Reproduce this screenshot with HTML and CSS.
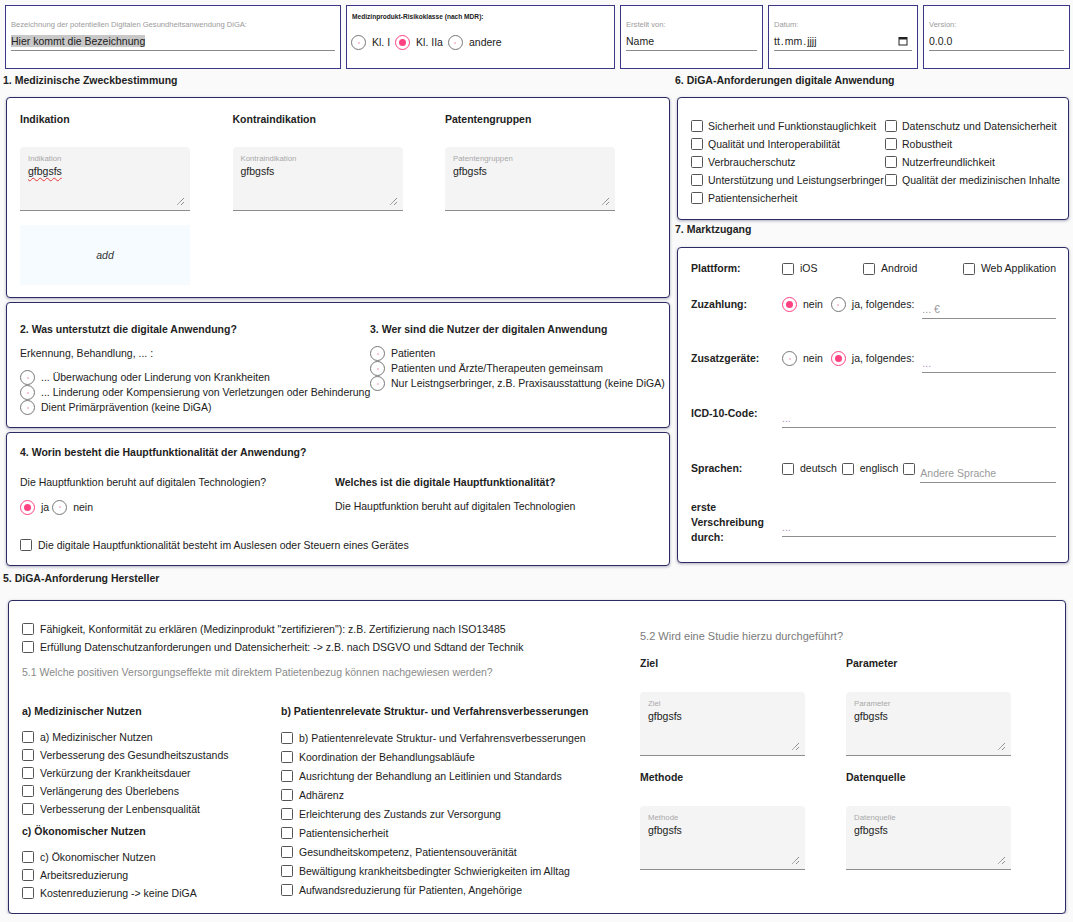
FILE: index.html
```html
<!DOCTYPE html>
<html lang="de">
<head>
<meta charset="utf-8">
<title>DiGA Formular</title>
<link rel="stylesheet" href="styles.css">
</head>
<body>
<div class="page">
  <header class="topbar">
    <div class="tbox w1">
      <div class="tlabel">Bezeichnung der potentiellen Digitalen Gesundheitsanwendung DiGA:</div>
      <div class="tvalue"><span class="selected">Hier kommt die Bezeichnung</span></div>
    </div>
    <div class="tbox w2">
      <div class="class-title">Medizinprodukt-Risikoklasse (nach MDR):</div>
      <div class="class-opts">
        <span class="opt"><span class="radio"></span>Kl. I</span>
        <span class="opt"><span class="radio on"></span>Kl. IIa</span>
        <span class="opt"><span class="radio"></span>andere</span>
      </div>
    </div>
    <div class="tbox w3">
      <div class="tlabel">Erstellt von:</div>
      <div class="tvalue">Name</div>
    </div>
    <div class="tbox w4">
      <div class="tlabel">Datum:</div>
      <div class="tvalue date"><span class="dtext">tt<span class="sep">.</span>mm<span class="sep">.</span>jjjj</span>
        <svg class="cal" width="10" height="10" viewBox="0 0 10 10"><rect x="1" y="1.5" width="8" height="7.5" fill="none" stroke="#222" stroke-width="1"/><rect x="1" y="1.5" width="8" height="2" fill="#222"/></svg>
      </div>
    </div>
    <div class="tbox w5">
      <div class="tlabel">Version:</div>
      <div class="tvalue">0.0.0</div>
    </div>
  </header>

  <div class="main">
    <div class="col-left">
      <div class="sec-title">1. Medizinische Zweckbestimmung</div>
      <section class="card card1">
        <div class="grid3">
          <div class="tacol">
            <div class="colhead">Indikation</div>
            <div class="ta"><div class="ta-label">Indikation</div><div class="ta-value"><span class="spell">gfbgsfs</span></div>
              <svg class="grip" width="9" height="9" viewBox="0 0 9 9"><path d="M8 1 L1 8 M8 5 L5 8" stroke="#555" stroke-width="0.9" stroke-dasharray="1 0.6"/></svg></div>
            <div class="addbox">add</div>
          </div>
          <div class="tacol">
            <div class="colhead">Kontraindikation</div>
            <div class="ta"><div class="ta-label">Kontraindikation</div><div class="ta-value">gfbgsfs</div>
              <svg class="grip" width="9" height="9" viewBox="0 0 9 9"><path d="M8 1 L1 8 M8 5 L5 8" stroke="#555" stroke-width="0.9" stroke-dasharray="1 0.6"/></svg></div>
          </div>
          <div class="tacol">
            <div class="colhead">Patentengruppen</div>
            <div class="ta"><div class="ta-label">Patentengruppen</div><div class="ta-value">gfbgsfs</div>
              <svg class="grip" width="9" height="9" viewBox="0 0 9 9"><path d="M8 1 L1 8 M8 5 L5 8" stroke="#555" stroke-width="0.9" stroke-dasharray="1 0.6"/></svg></div>
          </div>
        </div>
      </section>

      <section class="card card2">
        <div class="c2grid">
          <div>
            <div class="bhead">2. Was unterstutzt die digitale Anwendung?</div>
            <div class="c2sub">Erkennung, Behandlung, ... :</div>
            <div class="rlist">
              <span class="opt row15"><span class="radio"></span>... Überwachung oder Linderung von Krankheiten</span>
              <span class="opt row15"><span class="radio"></span>... Linderung oder Kompensierung von Verletzungen oder Behinderung</span>
              <span class="opt row15"><span class="radio"></span>Dient Primärprävention (keine DiGA)</span>
            </div>
          </div>
          <div>
            <div class="bhead">3. Wer sind die Nutzer der digitalen Anwendung</div>
            <div class="rlist">
              <span class="opt row15"><span class="radio"></span>Patienten</span>
              <span class="opt row15"><span class="radio"></span>Patienten und Ärzte/Therapeuten gemeinsam</span>
              <span class="opt row15"><span class="radio"></span>Nur Leistngserbringer, z.B. Praxisausstattung (keine DiGA)</span>
            </div>
          </div>
        </div>
      </section>

      <section class="card card3">
        <div class="bhead">4. Worin besteht die Hauptfunktionalität der Anwendung?</div>
        <div class="c3grid">
          <div class="c3q">Die Hauptfunktion beruht auf digitalen Technologien?</div>
          <div class="c3q bhead">Welches ist die digitale Hauptfunktionalität?</div>
          <div class="c3opts">
            <span class="opt"><span class="radio on"></span>ja</span>
            <span class="opt"><span class="radio"></span>nein</span>
          </div>
          <div class="c3ans">Die Hauptfunktion beruht auf digitalen Technologien</div>
        </div>
        <div class="opt c3check"><span class="cb"></span>Die digitale Hauptfunktionalität besteht im Auslesen oder Steuern eines Gerätes</div>
      </section>
    </div>

    <div class="col-right">
      <div class="sec-title">6. DiGA-Anforderungen digitale Anwendung</div>
      <section class="card card6">
        <div class="c6grid">
          <span class="opt"><span class="cb"></span>Sicherheit und Funktionstauglichkeit</span>
          <span class="opt"><span class="cb"></span>Qualität und Interoperabilität</span>
          <span class="opt"><span class="cb"></span>Verbraucherschutz</span>
          <span class="opt"><span class="cb"></span>Unterstützung und Leistungserbringer</span>
          <span class="opt"><span class="cb"></span>Patientensicherheit</span>
          <span class="opt"><span class="cb"></span>Datenschutz und Datensicherheit</span>
          <span class="opt"><span class="cb"></span>Robustheit</span>
          <span class="opt"><span class="cb"></span>Nutzerfreundlichkeit</span>
          <span class="opt"><span class="cb"></span>Qualität der medizinischen Inhalte</span>
        </div>
      </section>
      <div class="sec-title t7">7. Marktzugang</div>
      <section class="card card7">
        <div class="mrow r1">
          <div class="mlabel">Plattform:</div>
          <div class="mctl spread">
            <span class="opt"><span class="cb"></span>iOS</span>
            <span class="opt"><span class="cb"></span>Android</span>
            <span class="opt"><span class="cb"></span>Web Applikation</span>
          </div>
        </div>
        <div class="mrow r2">
          <div class="mlabel">Zuzahlung:</div>
          <div class="mctl">
            <span class="opt"><span class="radio on"></span>nein</span>
            <span class="opt"><span class="radio"></span>ja, folgendes:</span>
            <span class="line"><span class="ph">... €</span></span>
          </div>
        </div>
        <div class="mrow r3">
          <div class="mlabel">Zusatzgeräte:</div>
          <div class="mctl">
            <span class="opt"><span class="radio"></span>nein</span>
            <span class="opt"><span class="radio on"></span>ja, folgendes:</span>
            <span class="line"><span class="ph dots">...</span></span>
          </div>
        </div>
        <div class="mrow r4">
          <div class="mlabel">ICD-10-Code:</div>
          <div class="mctl">
            <span class="line"><span class="ph dots">...</span></span>
          </div>
        </div>
        <div class="mrow r5">
          <div class="mlabel">Sprachen:</div>
          <div class="mctl">
            <span class="opt"><span class="cb"></span>deutsch</span>
            <span class="opt"><span class="cb"></span>englisch</span>
            <span class="opt"><span class="cb"></span></span>
            <span class="line"><span class="ph">Andere Sprache</span></span>
          </div>
        </div>
        <div class="mrow r6">
          <div class="mlabel">erste Verschreibung durch:</div>
          <div class="mctl">
            <span class="line low"><span class="ph dots">...</span></span>
          </div>
        </div>
      </section>
    </div>
  </div>

  <div class="sec-title t5">5. DiGA-Anforderung Hersteller</div>
  <section class="card card5">
    <div class="c5left">
      <div class="opt row18"><span class="cb"></span>Fähigkeit, Konformität zu erklären (Medizinprodukt "zertifizieren"): z.B. Zertifizierung nach ISO13485</div>
      <div class="opt row18"><span class="cb"></span>Erfüllung Datenschutzanforderungen und Datensicherheit: -&gt; z.B. nach DSGVO und Sdtand der Technik</div>
      <div class="graytext q51">5.1 Welche positiven Versorgungseffekte mit direktem Patietenbezug können nachgewiesen werden?</div>
      <div class="c5grid">
        <div>
          <div class="bhead">a) Medizinischer Nutzen</div>
          <div class="clist">
            <span class="opt row18"><span class="cb"></span>a) Medizinischer Nutzen</span>
            <span class="opt row18"><span class="cb"></span>Verbesserung des Gesundheitszustands</span>
            <span class="opt row18"><span class="cb"></span>Verkürzung der Krankheitsdauer</span>
            <span class="opt row18"><span class="cb"></span>Verlängerung des Überlebens</span>
            <span class="opt row18"><span class="cb"></span>Verbesserung der Lenbensqualität</span>
          </div>
          <div class="bhead chead">c) Ökonomischer Nutzen</div>
          <div class="clist">
            <span class="opt row18"><span class="cb"></span>c) Ökonomischer Nutzen</span>
            <span class="opt row18"><span class="cb"></span>Arbeitsreduzierung</span>
            <span class="opt row18"><span class="cb"></span>Kostenreduzierung -&gt; keine DiGA</span>
          </div>
        </div>
        <div>
          <div class="bhead">b) Patientenrelevate Struktur- und Verfahrensverbesserungen</div>
          <div class="clist blist">
            <span class="opt row19"><span class="cb"></span>b) Patientenrelevate Struktur- und Verfahrensverbesserungen</span>
            <span class="opt row19"><span class="cb"></span>Koordination der Behandlungsabläufe</span>
            <span class="opt row19"><span class="cb"></span>Ausrichtung der Behandlung an Leitlinien und Standards</span>
            <span class="opt row19"><span class="cb"></span>Adhärenz</span>
            <span class="opt row19"><span class="cb"></span>Erleichterung des Zustands zur Versorgung</span>
            <span class="opt row19"><span class="cb"></span>Patientensicherheit</span>
            <span class="opt row19"><span class="cb"></span>Gesundheitskompetenz, Patientensouveränität</span>
            <span class="opt row19"><span class="cb"></span>Bewältigung krankheitsbedingter Schwierigkeiten im Alltag</span>
            <span class="opt row19"><span class="cb"></span>Aufwandsreduzierung für Patienten, Angehörige</span>
          </div>
        </div>
      </div>
    </div>
    <div class="c5right">
      <div class="graytext q52">5.2 Wird eine Studie hierzu durchgeführt?</div>
      <div class="studygrid">
        <div>
          <div class="colhead">Ziel</div>
          <div class="ta"><div class="ta-label">Ziel</div><div class="ta-value">gfbgsfs</div>
            <svg class="grip" width="9" height="9" viewBox="0 0 9 9"><path d="M8 1 L1 8 M8 5 L5 8" stroke="#555" stroke-width="0.9" stroke-dasharray="1 0.6"/></svg></div>
        </div>
        <div>
          <div class="colhead">Parameter</div>
          <div class="ta"><div class="ta-label">Parameter</div><div class="ta-value">gfbgsfs</div>
            <svg class="grip" width="9" height="9" viewBox="0 0 9 9"><path d="M8 1 L1 8 M8 5 L5 8" stroke="#555" stroke-width="0.9" stroke-dasharray="1 0.6"/></svg></div>
        </div>
        <div>
          <div class="colhead">Methode</div>
          <div class="ta"><div class="ta-label">Methode</div><div class="ta-value">gfbgsfs</div>
            <svg class="grip" width="9" height="9" viewBox="0 0 9 9"><path d="M8 1 L1 8 M8 5 L5 8" stroke="#555" stroke-width="0.9" stroke-dasharray="1 0.6"/></svg></div>
        </div>
        <div>
          <div class="colhead">Datenquelle</div>
          <div class="ta"><div class="ta-label">Datenquelle</div><div class="ta-value">gfbgsfs</div>
            <svg class="grip" width="9" height="9" viewBox="0 0 9 9"><path d="M8 1 L1 8 M8 5 L5 8" stroke="#555" stroke-width="0.9" stroke-dasharray="1 0.6"/></svg></div>
        </div>
      </div>
    </div>
  </section>
</div>
</body>
</html>
```

FILE: styles.css
```css
* { box-sizing: border-box; }
html, body { margin: 0; padding: 0; }
body {
  background: #fafafa;
  font-family: "Liberation Sans", Arial, sans-serif;
  font-size: 10.5px;
  color: #212121;
}
.page { width: 1073px; padding: 5px 3px 0 3px; }

/* top bar */
.topbar { display: flex; gap: 5px; padding-left: 2px; }
.tbox {
  height: 64px;
  background: #fff;
  border: 1px solid #3a3884;
  padding: 14px 5px 0 5px;
}
.w1 { width: 336px; }
.w2 { width: 269px; padding-top: 6px; padding-left: 4px; }
.w3 { width: 143px; }
.w4 { width: 150px; }
.w5 { width: 147px; }
.tlabel { font-size: 7.6px; line-height: 10px; color: #9b9b9b; white-space: nowrap; }
.tvalue {
  font-size: 10.5px; line-height: 14px;
  padding: 4px 0 2px 0;
  border-bottom: 1px solid #8a8a8a;
  color: #222;
}
.selected { background: #c8c8c8; }
.tvalue.date { display: flex; justify-content: space-between; align-items: center; padding-right: 4px; }
.sep { margin: 0 1px; }
.cal { display: block; }
.class-title { font-size: 6.6px; font-weight: bold; line-height: 10px; color: #222; padding-left: 1px; }
.class-opts { display: flex; gap: 5px; margin-top: 13px; }

/* options */
.opt { display: inline-flex; align-items: center; gap: 6px; white-space: nowrap; line-height: 15px; }
.radio {
  width: 15px; height: 15px; flex: none;
  border-radius: 50%;
  border: 1.2px solid #777;
  position: relative;
  background: #fff;
}
.radio::after {
  content: ""; position: absolute; left: 50%; top: 50%;
  width: 2px; height: 2px; margin: -1px 0 0 -1px;
  border-radius: 50%; background: #f7b3cb;
}
.radio.on { border: 1.6px solid #ff4081; }
.radio.on::after { width: 7px; height: 7px; margin: -3.5px 0 0 -3.5px; background: #ff4081; }
.cb {
  width: 12px; height: 12px; flex: none;
  border: 1.3px solid #555;
  border-radius: 1.5px;
  background: #fff;
}

/* layout */
.main { display: grid; grid-template-columns: 667px 395px; column-gap: 5px; }
.sec-title { font-weight: bold; line-height: 14px; padding: 4px 0 10px 0; color: #222; }
.sec-title.t7 { padding: 2px 0 11px 0; }
.sec-title.t5 { padding: 5px 0 15px 0; }
.card {
  background: #fff;
  border: 1px solid #2c2a62;
  border-radius: 4px;
  box-shadow: 0 1px 3px rgba(30, 30, 80, 0.35);
}
.col-left .card { margin-left: 3px; width: 664px; }
.col-left .card + .card { margin-top: 4px; }
.col-right .card { margin-left: 2px; width: 392px; }

.bhead { font-weight: bold; line-height: 14px; color: #222; white-space: nowrap; }
.colhead { font-weight: bold; line-height: 14px; color: #222; font-size: 10.5px; }

/* card 1 */
.card1 { padding: 14px 13px 12px 13px; }
.grid3 { display: grid; grid-template-columns: 170px 170px 170px; column-gap: 42.5px; }
.ta {
  position: relative;
  margin-top: 21px;
  height: 64px;
  background: #f4f4f4;
  border-radius: 4px 4px 0 0;
  border-bottom: 1px solid #8d8d8d;
  padding: 6.5px 8px 0 8px;
}
.ta-label { font-size: 7.8px; line-height: 9px; color: #a9a9a9; }
.ta-value { font-size: 10.5px; line-height: 14px; margin-top: 1.5px; color: #222; }
.spell { text-decoration: underline wavy #e53935; text-decoration-thickness: 1px; text-underline-offset: 2px; }
.grip { position: absolute; right: 5px; bottom: 4px; }
.addbox {
  margin-top: 14px;
  height: 60px;
  background: #f5fbff;
  display: flex; align-items: center; justify-content: center;
  font-style: italic; color: #333;
}

/* card 2 */
.card2 { padding: 19px 13px 12px 13px; }
.c2grid { display: grid; grid-template-columns: 350px 1fr; }
.c2sub { margin-top: 10px; line-height: 14px; }
.rlist { margin-top: 10px; display: flex; flex-direction: column; }
.row15 { height: 15px; }

/* card 3 */
.card3 { padding: 12px 13px 12.5px 13px; }
.c3grid { display: grid; grid-template-columns: 315px 1fr; margin-top: 16px; }
.c3q { line-height: 14px; }
.c3opts { display: flex; gap: 3px; margin-top: 10.5px; height: 15px; }
.c3opts .opt { gap: 6px; }
.c3ans { margin-top: 10px; line-height: 14px; }
.c3check { margin-top: 23px; height: 15px; display: flex; }

/* card 6 */
.card6 { padding: 19px 13px 12px 13px; }
.c6grid {
  display: grid;
  grid-template-columns: 194px 1fr;
  grid-template-rows: repeat(5, 18px);
  grid-auto-flow: column;
}
.c6grid .opt { gap: 5px; }

/* card 7 */
.card7 { padding: 13px 12px 17px 13px; }
.mrow { display: grid; grid-template-columns: 91px 1fr; align-items: start; }
.mlabel { font-weight: bold; line-height: 15px; color: #222; }
.mctl { display: flex; align-items: flex-start; gap: 8px; }
.mctl .opt { height: 15px; }
.mctl.spread { justify-content: space-between; }
.r2 { margin-top: 21px; }
.r3 { margin-top: 32px; }
.r4 { margin-top: 33px; }
.r5 { margin-top: 33px; }
.r6 { margin-top: 17px; }
.r5 .mctl { gap: 5px; }
.line {
  flex: 1;
  height: 22px;
  border-bottom: 1px solid #8f8f8f;
  padding-top: 5px;
  line-height: 15px;
}
.line.low { margin-top: 15px; }
.ph { color: #9a9a9a; }
.ph.dots { color: #b08cc0; }

/* card 5 */
.card5 { margin-left: 5px; width: 1058px; padding: 0 13px; display: flex; }
.c5left { width: 605px; padding: 19px 0 11px 0; flex: none; }
.row18 { height: 18px; display: flex; }
.row19 { height: 19px; }
.graytext { color: #8a8a8a; line-height: 15px; }
.q51 { margin-top: 8.5px; }
.c5grid { display: grid; grid-template-columns: 259px 1fr; margin-top: 24.5px; }
.clist { margin-top: 10px; display: flex; flex-direction: column; }
.clist.blist { margin-top: 10.5px; }
.chead { margin-top: 6px; }
.c5right { margin-left: 13px; padding-top: 27.5px; }
.q52 { font-size: 11px; color: #7a7a7a; }
.studygrid { display: grid; grid-template-columns: 165px 165px; column-gap: 41px; margin-top: 12.5px; row-gap: 14px; }
.studygrid .ta { margin-top: 22px; }
```
